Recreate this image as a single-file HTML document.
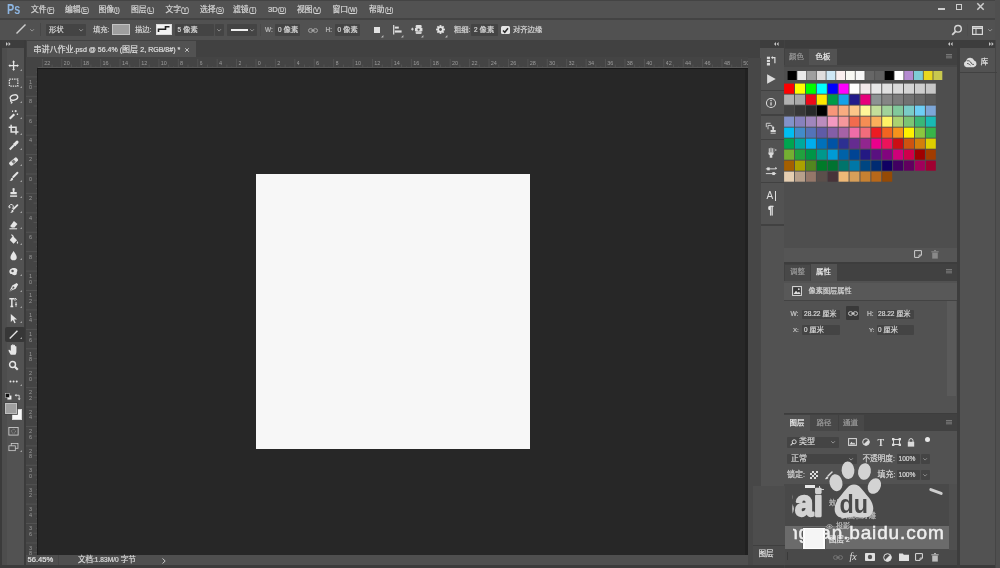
<!DOCTYPE html>
<html lang="zh-CN"><head><meta charset="utf-8"><title>Photoshop</title>
<style>
*{box-sizing:border-box;margin:0;padding:0}
html,body{width:1000px;height:568px;overflow:hidden;background:#535353}
#root{position:absolute;left:0;top:0;width:1000px;height:568px;will-change:transform;opacity:0.9999}
body{position:relative;font-family:"Liberation Sans","Noto Sans CJK SC",sans-serif;font-size:8px;color:#d6d6d6;line-height:1}
.b{position:absolute}
.t{position:absolute;white-space:nowrap;font-size:8px;line-height:10px;height:10px;color:#d6d6d6;-webkit-text-stroke:0.22px currentColor}
.f{position:absolute;background:#454545;border-radius:1px}
u{text-decoration:underline;text-underline-offset:1px}
svg{position:absolute;overflow:visible}
.rn{position:absolute;font-size:5.5px;line-height:6px;color:#9c9c9c;white-space:nowrap}
.sw{position:absolute;width:10px;height:10px}
.rs{position:absolute;width:9px;height:9px}
</style></head><body><div id="root">

<div class="b" style="left:0px;top:0px;width:1000px;height:18px;background:#535353;"></div>
<div class="b" style="left:0px;top:18px;width:1000px;height:1.5px;background:#444444;"></div>
<div class="b" style="left:0px;top:0px;width:1000px;height:0.7px;background:#454545;"></div>
<div class="b" style="left:6.8px;top:0.5px;font-size:15px;line-height:16px;font-weight:bold;color:#8eb6e2;transform:scaleX(0.72);transform-origin:0 0">Ps</div>
<div class="t" style="left:31px;top:5px;font-size:7.8px">文件<span style="display:inline-block;transform:scaleX(0.76);transform-origin:0 50%;margin-right:-2.39px">(<u>F</u>)</span></div>
<div class="t" style="left:65px;top:5px;font-size:7.8px">编辑<span style="display:inline-block;transform:scaleX(0.76);transform-origin:0 50%;margin-right:-2.50px">(<u>E</u>)</span></div>
<div class="t" style="left:98.5px;top:5px;font-size:7.8px">图像<span style="display:inline-block;transform:scaleX(0.76);transform-origin:0 50%;margin-right:-1.77px">(<u>I</u>)</span></div>
<div class="t" style="left:131px;top:5px;font-size:7.8px">图层<span style="display:inline-block;transform:scaleX(0.76);transform-origin:0 50%;margin-right:-2.29px">(<u>L</u>)</span></div>
<div class="t" style="left:165.5px;top:5px;font-size:7.8px">文字<span style="display:inline-block;transform:scaleX(0.76);transform-origin:0 50%;margin-right:-2.50px">(<u>Y</u>)</span></div>
<div class="t" style="left:200px;top:5px;font-size:7.8px">选择<span style="display:inline-block;transform:scaleX(0.76);transform-origin:0 50%;margin-right:-2.50px">(<u>S</u>)</span></div>
<div class="t" style="left:233px;top:5px;font-size:7.8px">滤镜<span style="display:inline-block;transform:scaleX(0.76);transform-origin:0 50%;margin-right:-2.39px">(<u>T</u>)</span></div>
<div class="t" style="left:268px;top:5px;font-size:7.8px"><span style="font-size:0.98em">3D</span><span style="display:inline-block;transform:scaleX(0.76);transform-origin:0 50%;margin-right:-2.60px">(<u>D</u>)</span></div>
<div class="t" style="left:297px;top:5px;font-size:7.8px">视图<span style="display:inline-block;transform:scaleX(0.76);transform-origin:0 50%;margin-right:-2.50px">(<u>V</u>)</span></div>
<div class="t" style="left:332.5px;top:5px;font-size:7.8px">窗口<span style="display:inline-block;transform:scaleX(0.76);transform-origin:0 50%;margin-right:-3.01px">(<u>W</u>)</span></div>
<div class="t" style="left:369px;top:5px;font-size:7.8px">帮助<span style="display:inline-block;transform:scaleX(0.76);transform-origin:0 50%;margin-right:-2.60px">(<u>H</u>)</span></div>
<div class="b" style="left:938px;top:8px;width:7px;height:1.5px;background:#cfcfcf;"></div>
<div class="b" style="left:955.5px;top:3.5px;width:6.5px;height:6px;border:1.3px solid #cfcfcf"></div>
<svg style="left:977px;top:3px" width="7" height="7" viewBox="0 0 7 7"><path d="M0.3 0.3L6.7 6.7M6.7 0.3L0.3 6.7" stroke="#cfcfcf" stroke-width="1.5" fill="none"/></svg>
<div class="b" style="left:0px;top:19.5px;width:1000px;height:20.5px;background:#525252;"></div>
<svg style="left:15px;top:23px" width="12" height="12" viewBox="0 0 12 12"><path d="M1.5 10.5L10.5 1.5" stroke="#cfcfcf" stroke-width="1.4" fill="none"/></svg>
<svg style="left:30.4px;top:28.8px" width="4.2" height="2.5" viewBox="0 0 5 3"><path d="M0.3 0.3L2.5 2.5L4.7 0.3" stroke="#a4a4a4" stroke-width="1.0" fill="none"/></svg>
<div class="b" style="left:40px;top:23px;width:1px;height:13px;background:#484848;"></div>
<div class="f" style="left:46px;top:24px;width:40px;height:11.5px"></div>
<div class="t" style="left:49px;top:25px;font-size:7.3px">形状</div>
<svg style="left:79.4px;top:28.8px" width="4.2" height="2.5" viewBox="0 0 5 3"><path d="M0.3 0.3L2.5 2.5L4.7 0.3" stroke="#a4a4a4" stroke-width="1.0" fill="none"/></svg>
<div class="t" style="left:93px;top:25px;font-size:7.3px">填充<span style="font-size:0.88em">:</span></div>
<div class="b" style="left:112px;top:23.5px;width:17.5px;height:11.5px;background:#a0a0a0;border:1px solid #c4c4c4"></div>
<div class="t" style="left:135px;top:25px;font-size:7.3px">描边<span style="font-size:0.88em">:</span></div>
<div class="b" style="left:155.5px;top:23.5px;width:16.5px;height:11.5px;background:#f4f4f4;border:1px solid #dcdcdc"></div>
<svg style="left:158px;top:26px" width="12" height="7" viewBox="0 0 12 7"><path d="M0.5 6V3.2H7.5V0.8H11.5" stroke="#222" stroke-width="1.6" fill="none"/></svg>
<div class="f" style="left:175px;top:24px;width:38.5px;height:11.5px"></div>
<div class="t" style="left:177.5px;top:25px;font-size:7.3px"><span style="font-size:0.88em">5</span> 像素</div>
<div class="f" style="left:215px;top:24px;width:8.5px;height:11.5px"></div>
<svg style="left:217.20000000000002px;top:28.8px" width="4.2" height="2.5" viewBox="0 0 5 3"><path d="M0.3 0.3L2.5 2.5L4.7 0.3" stroke="#a4a4a4" stroke-width="1.0" fill="none"/></svg>
<div class="f" style="left:227px;top:24px;width:29.5px;height:11.5px"></div>
<div class="b" style="left:230.5px;top:29.2px;width:17.5px;height:1.6px;background:#f0f0f0;"></div>
<svg style="left:249.9px;top:28.8px" width="4.2" height="2.5" viewBox="0 0 5 3"><path d="M0.3 0.3L2.5 2.5L4.7 0.3" stroke="#a4a4a4" stroke-width="1.0" fill="none"/></svg>
<div class="b" style="left:259.5px;top:23.5px;width:1px;height:12.5px;background:#4b4b4b;"></div>
<div class="t" style="left:265px;top:25px;font-size:7.3px;color:#bdbdbd"><span style="font-size:0.88em">W:</span></div>
<div class="f" style="left:275px;top:24px;width:24.5px;height:11.5px"></div>
<div class="t" style="left:278px;top:25px;font-size:7.3px"><span style="font-size:0.88em">0</span> 像素</div>
<svg style="left:307.5px;top:27.5px" width="10" height="5" viewBox="0 0 10 5"><rect x="0.5" y="0.7" width="4.2" height="3.6" rx="1.8" fill="none" stroke="#a8a8a8" stroke-width="1"/><rect x="5.3" y="0.7" width="4.2" height="3.6" rx="1.8" fill="none" stroke="#a8a8a8" stroke-width="1"/><path d="M3.4 2.5H6.6" stroke="#a8a8a8" stroke-width="1"/></svg>
<div class="t" style="left:325.5px;top:25px;font-size:7.3px;color:#bdbdbd"><span style="font-size:0.88em">H:</span></div>
<div class="f" style="left:334.5px;top:24px;width:25px;height:11.5px"></div>
<div class="t" style="left:337.5px;top:25px;font-size:7.3px"><span style="font-size:0.88em">0</span> 像素</div>
<div class="b" style="left:374px;top:26.8px;width:6.3px;height:6.2px;background:#e4e4e4;"></div>
<svg style="left:380.8px;top:35px" width="2.4" height="2.4" viewBox="0 0 3 3"><path d="M3 0V3H0Z" fill="#bdbdbd"/></svg>
<svg style="left:393px;top:25px" width="9" height="9.5" viewBox="0 0 9 9.5"><path d="M0.7 0V9.5" stroke="#e0e0e0" stroke-width="1.2"/><rect x="1.8" y="1.6" width="4" height="2" fill="#e0e0e0"/><rect x="1.8" y="5.4" width="6.8" height="2.2" fill="#e0e0e0"/></svg>
<svg style="left:400.8px;top:35px" width="2.4" height="2.4" viewBox="0 0 3 3"><path d="M3 0V3H0Z" fill="#bdbdbd"/></svg>
<svg style="left:411.3px;top:24px" width="13" height="11.2" viewBox="0 0 14 12"><path d="M0 5.5H3M1.5 4V7" stroke="#e0e0e0" stroke-width="1"/><rect x="5" y="1" width="6.5" height="3.4" rx="1.2" fill="#e0e0e0"/><rect x="4.3" y="4.2" width="8" height="3.6" fill="#e0e0e0"/><rect x="5" y="7.8" width="6.5" height="3" rx="1" fill="#cfcfcf"/><circle cx="8.2" cy="6" r="1.2" fill="#535353"/></svg>
<svg style="left:421px;top:35px" width="2.4" height="2.4" viewBox="0 0 3 3"><path d="M3 0V3H0Z" fill="#bdbdbd"/></svg>
<svg style="left:436px;top:25px" width="9" height="9" viewBox="-5 -5 10 10"><rect x="-1" y="-4.9" width="2" height="2.4" fill="#e4e4e4" transform="rotate(0)"/><rect x="-1" y="-4.9" width="2" height="2.4" fill="#e4e4e4" transform="rotate(45)"/><rect x="-1" y="-4.9" width="2" height="2.4" fill="#e4e4e4" transform="rotate(90)"/><rect x="-1" y="-4.9" width="2" height="2.4" fill="#e4e4e4" transform="rotate(135)"/><rect x="-1" y="-4.9" width="2" height="2.4" fill="#e4e4e4" transform="rotate(180)"/><rect x="-1" y="-4.9" width="2" height="2.4" fill="#e4e4e4" transform="rotate(225)"/><rect x="-1" y="-4.9" width="2" height="2.4" fill="#e4e4e4" transform="rotate(270)"/><rect x="-1" y="-4.9" width="2" height="2.4" fill="#e4e4e4" transform="rotate(315)"/><circle r="3.5" fill="#e4e4e4"/><circle r="1.6" fill="#535353"/></svg>
<svg style="left:444.8px;top:35px" width="2.4" height="2.4" viewBox="0 0 3 3"><path d="M3 0V3H0Z" fill="#bdbdbd"/></svg>
<div class="t" style="left:454px;top:25px;font-size:7.3px">粗细<span style="font-size:0.88em">:</span></div>
<div class="f" style="left:471px;top:24px;width:27px;height:11.5px"></div>
<div class="t" style="left:474px;top:25px;font-size:7.3px"><span style="font-size:0.88em">2</span> 像素</div>
<div class="b" style="left:500.5px;top:25.5px;width:9px;height:8.5px;background:#e6e6e6;border-radius:1.5px"></div>
<svg style="left:501.5px;top:26.5px" width="7" height="7" viewBox="0 0 7 7"><path d="M1 3.4L2.8 5.3L6 1.2" stroke="#2a2a2a" stroke-width="1.5" fill="none"/></svg>
<div class="t" style="left:513px;top:25px;font-size:7.3px">对齐边缘</div>
<svg style="left:951px;top:24px" width="12" height="12" viewBox="0 0 12 12"><circle cx="7" cy="4.8" r="3.3" fill="none" stroke="#d8d8d8" stroke-width="1.4"/><path d="M4.6 7.4L1.2 10.8" stroke="#d8d8d8" stroke-width="1.8"/></svg>
<div class="b" style="left:967px;top:24px;width:1px;height:12px;background:#4e4e4e;"></div>
<svg style="left:972px;top:25.5px" width="11" height="9" viewBox="0 0 11 9"><rect x="0.6" y="0.6" width="9.8" height="7.8" fill="none" stroke="#d8d8d8" stroke-width="1.2"/><path d="M0.6 2.2H10.4" stroke="#d8d8d8" stroke-width="1.6"/><path d="M4 2V8.4" stroke="#d8d8d8" stroke-width="1"/></svg>
<svg style="left:987.9px;top:28.8px" width="4.2" height="2.5" viewBox="0 0 5 3"><path d="M0.3 0.3L2.5 2.5L4.7 0.3" stroke="#a4a4a4" stroke-width="1.0" fill="none"/></svg>
<div class="b" style="left:0px;top:40px;width:1000px;height:8px;background:#3e3e3e;"></div>
<div class="b" style="left:0px;top:48px;width:24.3px;height:520px;background:#535353;"></div>
<div class="b" style="left:24.3px;top:40px;width:1.4px;height:528px;background:#3c3c3c;"></div>
<div class="b" style="left:0px;top:40px;width:1.5px;height:528px;background:#3c3c3c;"></div>
<div class="b" style="left:1.5px;top:48px;width:5.5px;height:517px;background:#4e4e4e;"></div>
<svg style="left:5.5px;top:42px" width="5" height="4" viewBox="0 0 5 4"><path d="M0 0L2 2L0 4Z M2.6 0L4.6 2L2.6 4Z" fill="#c8c8c8"/></svg>
<div class="b" style="left:25.7px;top:40px;width:734.8px;height:18px;background:#424242;"></div>
<div class="b" style="left:27px;top:40.5px;width:168.5px;height:17.5px;background:#535353;"></div>
<div class="t" style="left:33.5px;top:44.5px;color:#dedede">串讲八作业<span style="font-size:0.88em">.psd @ 56.4% (</span>图层 <span style="font-size:0.88em">2, RGB/8#) *</span></div>
<svg style="left:185px;top:47.5px" width="4" height="4" viewBox="0 0 4 4"><path d="M0.2 0.2L3.8 3.8M3.8 0.2L0.2 3.8" stroke="#d0d0d0" stroke-width="0.9"/></svg>
<div class="b" style="left:25.7px;top:57px;width:722.3px;height:11.5px;background:#454545;"></div>
<div class="b" style="left:25.7px;top:57px;width:12.3px;height:498px;background:#454545;"></div>
<div class="b" style="left:38px;top:68.5px;width:710px;height:486px;background:#282828;"></div>
<div class="b" style="left:744.5px;top:68.5px;width:3.5px;height:486px;background:#222222;"></div>
<div class="b" style="left:748px;top:58px;width:12.5px;height:510px;background:#484848;"></div>
<svg style="left:0;top:0" width="1000" height="568" viewBox="0 0 1000 568"><path d="M42.39 59V68.5 M47.25 66.5V68.5 M52.10 64.5V68.5 M56.96 66.5V68.5 M61.81 59V68.5 M66.67 66.5V68.5 M71.52 64.5V68.5 M76.38 66.5V68.5 M81.23 59V68.5 M86.09 66.5V68.5 M90.94 64.5V68.5 M95.79 66.5V68.5 M100.65 59V68.5 M105.50 66.5V68.5 M110.36 64.5V68.5 M115.21 66.5V68.5 M120.07 59V68.5 M124.92 66.5V68.5 M129.78 64.5V68.5 M134.63 66.5V68.5 M139.49 59V68.5 M144.34 66.5V68.5 M149.20 64.5V68.5 M154.05 66.5V68.5 M158.91 59V68.5 M163.76 66.5V68.5 M168.62 64.5V68.5 M173.47 66.5V68.5 M178.32 59V68.5 M183.18 66.5V68.5 M188.03 64.5V68.5 M192.89 66.5V68.5 M197.74 59V68.5 M202.60 66.5V68.5 M207.45 64.5V68.5 M212.31 66.5V68.5 M217.16 59V68.5 M222.02 66.5V68.5 M226.87 64.5V68.5 M231.73 66.5V68.5 M236.58 59V68.5 M241.44 66.5V68.5 M246.29 64.5V68.5 M251.15 66.5V68.5 M256.00 59V68.5 M260.85 66.5V68.5 M265.71 64.5V68.5 M270.56 66.5V68.5 M275.42 59V68.5 M280.27 66.5V68.5 M285.13 64.5V68.5 M289.98 66.5V68.5 M294.84 59V68.5 M299.69 66.5V68.5 M304.55 64.5V68.5 M309.40 66.5V68.5 M314.26 59V68.5 M319.11 66.5V68.5 M323.97 64.5V68.5 M328.82 66.5V68.5 M333.68 59V68.5 M338.53 66.5V68.5 M343.38 64.5V68.5 M348.24 66.5V68.5 M353.09 59V68.5 M357.95 66.5V68.5 M362.80 64.5V68.5 M367.66 66.5V68.5 M372.51 59V68.5 M377.37 66.5V68.5 M382.22 64.5V68.5 M387.08 66.5V68.5 M391.93 59V68.5 M396.79 66.5V68.5 M401.64 64.5V68.5 M406.50 66.5V68.5 M411.35 59V68.5 M416.21 66.5V68.5 M421.06 64.5V68.5 M425.91 66.5V68.5 M430.77 59V68.5 M435.62 66.5V68.5 M440.48 64.5V68.5 M445.33 66.5V68.5 M450.19 59V68.5 M455.04 66.5V68.5 M459.90 64.5V68.5 M464.75 66.5V68.5 M469.61 59V68.5 M474.46 66.5V68.5 M479.32 64.5V68.5 M484.17 66.5V68.5 M489.03 59V68.5 M493.88 66.5V68.5 M498.74 64.5V68.5 M503.59 66.5V68.5 M508.45 59V68.5 M513.30 66.5V68.5 M518.15 64.5V68.5 M523.01 66.5V68.5 M527.86 59V68.5 M532.72 66.5V68.5 M537.57 64.5V68.5 M542.43 66.5V68.5 M547.28 59V68.5 M552.14 66.5V68.5 M556.99 64.5V68.5 M561.85 66.5V68.5 M566.70 59V68.5 M571.56 66.5V68.5 M576.41 64.5V68.5 M581.27 66.5V68.5 M586.12 59V68.5 M590.98 66.5V68.5 M595.83 64.5V68.5 M600.68 66.5V68.5 M605.54 59V68.5 M610.39 66.5V68.5 M615.25 64.5V68.5 M620.10 66.5V68.5 M624.96 59V68.5 M629.81 66.5V68.5 M634.67 64.5V68.5 M639.52 66.5V68.5 M644.38 59V68.5 M649.23 66.5V68.5 M654.09 64.5V68.5 M658.94 66.5V68.5 M663.80 59V68.5 M668.65 66.5V68.5 M673.51 64.5V68.5 M678.36 66.5V68.5 M683.21 59V68.5 M688.07 66.5V68.5 M692.92 64.5V68.5 M697.78 66.5V68.5 M702.63 59V68.5 M707.49 66.5V68.5 M712.34 64.5V68.5 M717.20 66.5V68.5 M722.05 59V68.5 M726.91 66.5V68.5 M731.76 64.5V68.5 M736.62 66.5V68.5 M741.47 59V68.5 M746.33 66.5V68.5" stroke="#5e5e5e" stroke-width="0.6" fill="none"/></svg>
<div class="rn" style="left:44.2px;top:59.6px;max-width:703.8px;overflow:hidden">22</div>
<div class="rn" style="left:63.6px;top:59.6px;max-width:684.4px;overflow:hidden">20</div>
<div class="rn" style="left:83.0px;top:59.6px;max-width:665.0px;overflow:hidden">18</div>
<div class="rn" style="left:102.4px;top:59.6px;max-width:645.6px;overflow:hidden">16</div>
<div class="rn" style="left:121.9px;top:59.6px;max-width:626.1px;overflow:hidden">14</div>
<div class="rn" style="left:141.3px;top:59.6px;max-width:606.7px;overflow:hidden">12</div>
<div class="rn" style="left:160.7px;top:59.6px;max-width:587.3px;overflow:hidden">10</div>
<div class="rn" style="left:180.1px;top:59.6px;max-width:567.9px;overflow:hidden">8</div>
<div class="rn" style="left:199.5px;top:59.6px;max-width:548.5px;overflow:hidden">6</div>
<div class="rn" style="left:219.0px;top:59.6px;max-width:529.0px;overflow:hidden">4</div>
<div class="rn" style="left:238.4px;top:59.6px;max-width:509.6px;overflow:hidden">2</div>
<div class="rn" style="left:257.8px;top:59.6px;max-width:490.2px;overflow:hidden">0</div>
<div class="rn" style="left:277.2px;top:59.6px;max-width:470.8px;overflow:hidden">2</div>
<div class="rn" style="left:296.6px;top:59.6px;max-width:451.4px;overflow:hidden">4</div>
<div class="rn" style="left:316.1px;top:59.6px;max-width:431.9px;overflow:hidden">6</div>
<div class="rn" style="left:335.5px;top:59.6px;max-width:412.5px;overflow:hidden">8</div>
<div class="rn" style="left:354.9px;top:59.6px;max-width:393.1px;overflow:hidden">10</div>
<div class="rn" style="left:374.3px;top:59.6px;max-width:373.7px;overflow:hidden">12</div>
<div class="rn" style="left:393.7px;top:59.6px;max-width:354.3px;overflow:hidden">14</div>
<div class="rn" style="left:413.2px;top:59.6px;max-width:334.8px;overflow:hidden">16</div>
<div class="rn" style="left:432.6px;top:59.6px;max-width:315.4px;overflow:hidden">18</div>
<div class="rn" style="left:452.0px;top:59.6px;max-width:296.0px;overflow:hidden">20</div>
<div class="rn" style="left:471.4px;top:59.6px;max-width:276.6px;overflow:hidden">22</div>
<div class="rn" style="left:490.8px;top:59.6px;max-width:257.2px;overflow:hidden">24</div>
<div class="rn" style="left:510.2px;top:59.6px;max-width:237.8px;overflow:hidden">26</div>
<div class="rn" style="left:529.7px;top:59.6px;max-width:218.3px;overflow:hidden">28</div>
<div class="rn" style="left:549.1px;top:59.6px;max-width:198.9px;overflow:hidden">30</div>
<div class="rn" style="left:568.5px;top:59.6px;max-width:179.5px;overflow:hidden">32</div>
<div class="rn" style="left:587.9px;top:59.6px;max-width:160.1px;overflow:hidden">34</div>
<div class="rn" style="left:607.3px;top:59.6px;max-width:140.7px;overflow:hidden">36</div>
<div class="rn" style="left:626.8px;top:59.6px;max-width:121.2px;overflow:hidden">38</div>
<div class="rn" style="left:646.2px;top:59.6px;max-width:101.8px;overflow:hidden">40</div>
<div class="rn" style="left:665.6px;top:59.6px;max-width:82.4px;overflow:hidden">42</div>
<div class="rn" style="left:685.0px;top:59.6px;max-width:63.0px;overflow:hidden">44</div>
<div class="rn" style="left:704.4px;top:59.6px;max-width:43.6px;overflow:hidden">46</div>
<div class="rn" style="left:723.9px;top:59.6px;max-width:24.1px;overflow:hidden">48</div>
<div class="rn" style="left:743.3px;top:59.6px;max-width:4.7px;overflow:hidden">50</div>
<svg style="left:0;top:0" width="1000" height="568" viewBox="0 0 1000 568"><path d="M36 72.05H38 M26 76.91H38 M36 81.76H38 M33.5 86.62H38 M36 91.47H38 M26 96.32H38 M36 101.18H38 M33.5 106.03H38 M36 110.89H38 M26 115.74H38 M36 120.60H38 M33.5 125.45H38 M36 130.31H38 M26 135.16H38 M36 140.02H38 M33.5 144.87H38 M36 149.73H38 M26 154.58H38 M36 159.44H38 M33.5 164.29H38 M36 169.15H38 M26 174.00H38 M36 178.85H38 M33.5 183.71H38 M36 188.56H38 M26 193.42H38 M36 198.27H38 M33.5 203.13H38 M36 207.98H38 M26 212.84H38 M36 217.69H38 M33.5 222.55H38 M36 227.40H38 M26 232.26H38 M36 237.11H38 M33.5 241.97H38 M36 246.82H38 M26 251.68H38 M36 256.53H38 M33.5 261.38H38 M36 266.24H38 M26 271.09H38 M36 275.95H38 M33.5 280.80H38 M36 285.66H38 M26 290.51H38 M36 295.37H38 M33.5 300.22H38 M36 305.08H38 M26 309.93H38 M36 314.79H38 M33.5 319.64H38 M36 324.50H38 M26 329.35H38 M36 334.21H38 M33.5 339.06H38 M36 343.91H38 M26 348.77H38 M36 353.62H38 M33.5 358.48H38 M36 363.33H38 M26 368.19H38 M36 373.04H38 M33.5 377.90H38 M36 382.75H38 M26 387.61H38 M36 392.46H38 M33.5 397.32H38 M36 402.17H38 M26 407.03H38 M36 411.88H38 M33.5 416.74H38 M36 421.59H38 M26 426.45H38 M36 431.30H38 M33.5 436.15H38 M36 441.01H38 M26 445.86H38 M36 450.72H38 M33.5 455.57H38 M36 460.43H38 M26 465.28H38 M36 470.14H38 M33.5 474.99H38 M36 479.85H38 M26 484.70H38 M36 489.56H38 M33.5 494.41H38 M36 499.27H38 M26 504.12H38 M36 508.98H38 M33.5 513.83H38 M36 518.68H38 M26 523.54H38 M36 528.39H38 M33.5 533.25H38 M36 538.10H38 M26 542.96H38 M36 547.81H38 M33.5 552.67H38" stroke="#5e5e5e" stroke-width="0.6" fill="none"/></svg>
<div class="rn" style="left:29px;top:78.7px">1</div>
<div class="rn" style="left:29px;top:84.3px">0</div>
<div class="rn" style="left:29px;top:98.1px">8</div>
<div class="rn" style="left:29px;top:117.5px">6</div>
<div class="rn" style="left:29px;top:137.0px">4</div>
<div class="rn" style="left:29px;top:156.4px">2</div>
<div class="rn" style="left:29px;top:175.8px">0</div>
<div class="rn" style="left:29px;top:195.2px">2</div>
<div class="rn" style="left:29px;top:214.6px">4</div>
<div class="rn" style="left:29px;top:234.1px">6</div>
<div class="rn" style="left:29px;top:253.5px">8</div>
<div class="rn" style="left:29px;top:272.9px">1</div>
<div class="rn" style="left:29px;top:278.5px">0</div>
<div class="rn" style="left:29px;top:292.3px">1</div>
<div class="rn" style="left:29px;top:297.9px">2</div>
<div class="rn" style="left:29px;top:311.7px">1</div>
<div class="rn" style="left:29px;top:317.3px">4</div>
<div class="rn" style="left:29px;top:331.2px">1</div>
<div class="rn" style="left:29px;top:336.8px">6</div>
<div class="rn" style="left:29px;top:350.6px">1</div>
<div class="rn" style="left:29px;top:356.2px">8</div>
<div class="rn" style="left:29px;top:370.0px">2</div>
<div class="rn" style="left:29px;top:375.6px">0</div>
<div class="rn" style="left:29px;top:389.4px">2</div>
<div class="rn" style="left:29px;top:395.0px">2</div>
<div class="rn" style="left:29px;top:408.8px">2</div>
<div class="rn" style="left:29px;top:414.4px">4</div>
<div class="rn" style="left:29px;top:428.2px">2</div>
<div class="rn" style="left:29px;top:433.8px">6</div>
<div class="rn" style="left:29px;top:447.7px">2</div>
<div class="rn" style="left:29px;top:453.3px">8</div>
<div class="rn" style="left:29px;top:467.1px">3</div>
<div class="rn" style="left:29px;top:472.7px">0</div>
<div class="rn" style="left:29px;top:486.5px">3</div>
<div class="rn" style="left:29px;top:492.1px">2</div>
<div class="rn" style="left:29px;top:505.9px">3</div>
<div class="rn" style="left:29px;top:511.5px">4</div>
<div class="rn" style="left:29px;top:525.3px">3</div>
<div class="rn" style="left:29px;top:530.9px">6</div>
<div class="rn" style="left:29px;top:544.8px">3</div>
<div class="rn" style="left:29px;top:550.4px">8</div>
<div class="b" style="left:38px;top:66.9px;width:710px;height:0.8px;background:#585858;"></div>
<div class="b" style="left:36.5px;top:68px;width:0.8px;height:486.5px;background:#585858;"></div>
<div class="b" style="left:37.4px;top:67.7px;width:710.6px;height:1.3px;background:#181818;"></div>
<div class="b" style="left:37.3px;top:68px;width:1.2px;height:486.5px;background:#1c1c1c;"></div>
<div class="b" style="left:256px;top:174px;width:274px;height:275px;background:#f8f8f8;"></div>
<div class="b" style="left:25.7px;top:554.5px;width:722.3px;height:11px;background:#505050;"></div>
<div class="b" style="left:0px;top:565px;width:1000px;height:3px;background:#3c3c3c;"></div>
<div class="t" style="left:27.5px;top:555px;font-size:7.6px;color:#e0e0e0">56.45%</div>
<div class="b" style="left:58px;top:555px;width:1px;height:10px;background:#484848;"></div>
<div class="t" style="left:78px;top:555px;font-size:7.5px;color:#d8d8d8">文档<span style="font-size:0.88em">:1.83M/0</span> 字节</div>
<svg style="left:161.5px;top:557.5px" width="4" height="6" viewBox="0 0 4 6"><path d="M0.5 0.5L3.2 3L0.5 5.5" stroke="#c8c8c8" stroke-width="1" fill="none"/></svg>
<svg style="left:8.4px;top:60.4px" width="11.2" height="11.2" viewBox="0 0 16 16" fill="none" stroke="#e6e6e6" stroke-width="1.68"><path d="M8 1.5V14.5M1.5 8H14.5" stroke-width="1.82"/><path d="M8 0.5L10 3.2H6Z M8 15.5L10 12.8H6Z M0.5 8L3.2 6V10Z M15.5 8L12.8 6V10Z" fill="#e6e6e6" stroke="none"/></svg>
<svg style="left:20px;top:68.8px" width="2" height="2" viewBox="0 0 3 3"><path d="M3 0V3H0Z" fill="#a0a0a0"/></svg>
<svg style="left:8.4px;top:77.1px" width="11.2" height="11.2" viewBox="0 0 16 16" fill="none" stroke="#e6e6e6" stroke-width="1.68"><rect x="2" y="3" width="12" height="10" stroke-dasharray="2 1.4" stroke-width="1.82"/></svg>
<svg style="left:20px;top:85.52px" width="2" height="2" viewBox="0 0 3 3"><path d="M3 0V3H0Z" fill="#a0a0a0"/></svg>
<svg style="left:8.4px;top:92.8px" width="11.2" height="11.2" viewBox="0 0 16 16" fill="none" stroke="#e6e6e6" stroke-width="1.68"><ellipse cx="8.5" cy="6.5" rx="5.5" ry="3.6" transform="rotate(-20 8.5 6.5)" stroke-width="1.96"/><path d="M4.5 9.5C3 10.5 3.5 12.5 5 12.5C6.5 12.5 6 14.5 4 14.5" stroke-width="1.54"/></svg>
<svg style="left:20px;top:101.24px" width="2" height="2" viewBox="0 0 3 3"><path d="M3 0V3H0Z" fill="#a0a0a0"/></svg>
<svg style="left:8.4px;top:108.6px" width="11.2" height="11.2" viewBox="0 0 16 16" fill="none" stroke="#e6e6e6" stroke-width="1.68"><path d="M2.5 14L9 7.5" stroke-width="3.08"/><path d="M11 1.5V4.5M9.5 3H12.5M13.5 6.5V8.5M12.5 7.5H14.5M6.5 2.5V4M5.7 3.2H7.3" stroke-width="1.40"/></svg>
<svg style="left:20px;top:116.96px" width="2" height="2" viewBox="0 0 3 3"><path d="M3 0V3H0Z" fill="#a0a0a0"/></svg>
<svg style="left:8.4px;top:124.3px" width="11.2" height="11.2" viewBox="0 0 16 16" fill="none" stroke="#e6e6e6" stroke-width="1.68"><path d="M4.5 1V11.5H15M1 4.5H11.5V15" stroke-width="2.10"/></svg>
<svg style="left:20px;top:132.68px" width="2" height="2" viewBox="0 0 3 3"><path d="M3 0V3H0Z" fill="#a0a0a0"/></svg>
<svg style="left:8.4px;top:140.0px" width="11.2" height="11.2" viewBox="0 0 16 16" fill="none" stroke="#e6e6e6" stroke-width="1.68"><path d="M2.5 13.5L8.5 7.5" stroke-width="2.80"/><path d="M8 5L11 8" stroke-width="2.24"/><path d="M10 6L13 3" stroke-width="4.20" stroke-linecap="round"/></svg>
<svg style="left:20px;top:148.40000000000003px" width="2" height="2" viewBox="0 0 3 3"><path d="M3 0V3H0Z" fill="#a0a0a0"/></svg>
<svg style="left:8.4px;top:155.7px" width="11.2" height="11.2" viewBox="0 0 16 16" fill="none" stroke="#e6e6e6" stroke-width="1.68"><rect x="1" y="5" width="14" height="6" rx="2" transform="rotate(-40 8 8)" fill="#e6e6e6" stroke="none"/><rect x="5.8" y="5.8" width="4.4" height="4.4" transform="rotate(-40 8 8)" fill="#777" stroke="none"/></svg>
<svg style="left:20px;top:164.12px" width="2" height="2" viewBox="0 0 3 3"><path d="M3 0V3H0Z" fill="#a0a0a0"/></svg>
<svg style="left:8.4px;top:171.4px" width="11.2" height="11.2" viewBox="0 0 16 16" fill="none" stroke="#e6e6e6" stroke-width="1.68"><path d="M13.5 2.5L7.5 8.5" stroke-width="2.80" stroke-linecap="round"/><path d="M6.5 9.5C4.5 9.5 4 11 4 12C3.5 13 2.5 13.5 2 13.5C4 14.5 7 14 7.5 11.5Z" fill="#e6e6e6" stroke="none"/></svg>
<svg style="left:20px;top:179.84000000000003px" width="2" height="2" viewBox="0 0 3 3"><path d="M3 0V3H0Z" fill="#a0a0a0"/></svg>
<svg style="left:8.4px;top:187.2px" width="11.2" height="11.2" viewBox="0 0 16 16" fill="none" stroke="#e6e6e6" stroke-width="1.68"><path d="M6.3 2.5A1.9 1.9 0 0 1 9.7 2.5L9 7H12.5V10.5H3.5V7H7Z" fill="#e6e6e6" stroke="none"/><path d="M3 13H13" stroke-width="2.10"/></svg>
<svg style="left:20px;top:195.56px" width="2" height="2" viewBox="0 0 3 3"><path d="M3 0V3H0Z" fill="#a0a0a0"/></svg>
<svg style="left:8.4px;top:202.9px" width="11.2" height="11.2" viewBox="0 0 16 16" fill="none" stroke="#e6e6e6" stroke-width="1.68"><path d="M13.5 3L8 8.5" stroke-width="2.52" stroke-linecap="round"/><path d="M7 9.5C5.3 9.5 5 11 5 12C4.5 13 3.5 13.5 3 13.5C5 14.3 7.5 14 8 11.5Z" fill="#e6e6e6" stroke="none"/><path d="M2 6.5A3 3 0 1 1 5.5 8" stroke-width="1.40"/><path d="M1 5L2 7L3.8 5.8" stroke-width="1.26"/></svg>
<svg style="left:20px;top:211.28000000000003px" width="2" height="2" viewBox="0 0 3 3"><path d="M3 0V3H0Z" fill="#a0a0a0"/></svg>
<svg style="left:8.4px;top:218.6px" width="11.2" height="11.2" viewBox="0 0 16 16" fill="none" stroke="#e6e6e6" stroke-width="1.68"><path d="M8.5 3L13.5 7L9 12.5H5.5L3 10.3Z" fill="#e6e6e6" stroke="none"/><path d="M3.5 10.7L6 13H9" stroke="#777" stroke-width="1.12"/><path d="M2 14H13" stroke-width="1.54"/></svg>
<svg style="left:20px;top:227.00000000000003px" width="2" height="2" viewBox="0 0 3 3"><path d="M3 0V3H0Z" fill="#a0a0a0"/></svg>
<svg style="left:8.4px;top:234.3px" width="11.2" height="11.2" viewBox="0 0 16 16" fill="none" stroke="#e6e6e6" stroke-width="1.68"><path d="M7 3L13 9L8 14L2.5 8.5Z" fill="#e6e6e6" stroke="none"/><path d="M4.5 1.5C6.5 1 8 3 7.5 6" stroke-width="1.54"/><path d="M13.5 10C14.8 12 14.8 13.8 13.5 13.8C12.2 13.8 12.2 12 13.5 10Z" fill="#e6e6e6" stroke="none"/></svg>
<svg style="left:20px;top:242.72000000000003px" width="2" height="2" viewBox="0 0 3 3"><path d="M3 0V3H0Z" fill="#a0a0a0"/></svg>
<svg style="left:8.4px;top:250.0px" width="11.2" height="11.2" viewBox="0 0 16 16" fill="none" stroke="#e6e6e6" stroke-width="1.68"><path d="M8 1.5C10.5 5.5 12.5 7.8 12.5 10.3A4.5 4.5 0 0 1 3.5 10.3C3.5 7.8 5.5 5.5 8 1.5Z" fill="#e6e6e6" stroke="none"/></svg>
<svg style="left:20px;top:258.44px" width="2" height="2" viewBox="0 0 3 3"><path d="M3 0V3H0Z" fill="#a0a0a0"/></svg>
<svg style="left:8.4px;top:265.8px" width="11.2" height="11.2" viewBox="0 0 16 16" fill="none" stroke="#e6e6e6" stroke-width="1.68"><path d="M3 5C5 2 11 2 13 4.5C14.5 7 12 8.5 12.5 10.5C13 13 9 14 7 12.5C5.5 11.5 3.5 12 2.5 10C1.5 8 2 6.5 3 5Z" fill="#e6e6e6" stroke="none"/><circle cx="6.5" cy="7" r="1.8" fill="#555" stroke="none"/></svg>
<svg style="left:20px;top:274.16px" width="2" height="2" viewBox="0 0 3 3"><path d="M3 0V3H0Z" fill="#a0a0a0"/></svg>
<svg style="left:8.4px;top:281.5px" width="11.2" height="11.2" viewBox="0 0 16 16" fill="none" stroke="#e6e6e6" stroke-width="1.68"><path d="M12.5 1.5L14.5 3.5L11 9.5L5 12L2 14L3.5 10.5L6 5Z" fill="#e6e6e6" stroke="none"/><circle cx="7.8" cy="8" r="1.4" fill="#555" stroke="none"/><path d="M2 14L7 9" stroke="#555" stroke-width="1.12"/></svg>
<svg style="left:20px;top:289.88000000000005px" width="2" height="2" viewBox="0 0 3 3"><path d="M3 0V3H0Z" fill="#a0a0a0"/></svg>
<svg style="left:8.4px;top:297.2px" width="11.2" height="11.2" viewBox="0 0 16 16" fill="none" stroke="#e6e6e6" stroke-width="1.68"><path d="M2 2.5H9M5.5 2.5V13.5M3.5 13.5H7.5" stroke-width="2.10"/><path d="M10 5.5V1.5L13 4M11.5 7V14M10 10.5H13" stroke-width="1.26"/></svg>
<svg style="left:20px;top:305.6px" width="2" height="2" viewBox="0 0 3 3"><path d="M3 0V3H0Z" fill="#a0a0a0"/></svg>
<svg style="left:8.4px;top:312.9px" width="11.2" height="11.2" viewBox="0 0 16 16" fill="none" stroke="#e6e6e6" stroke-width="1.68"><path d="M4 1.5V13L7 10L9.2 14.8L11 14L8.8 9.3H13Z" fill="#e6e6e6" stroke="none"/></svg>
<svg style="left:20px;top:321.32px" width="2" height="2" viewBox="0 0 3 3"><path d="M3 0V3H0Z" fill="#a0a0a0"/></svg>
<div class="b" style="left:5px;top:326.5px;width:19.5px;height:15.5px;background:#383838;border-radius:2px"></div>
<svg style="left:8.4px;top:328.6px" width="11.2" height="11.2" viewBox="0 0 16 16" fill="none" stroke="#e6e6e6" stroke-width="1.68"><path d="M2.5 13.5L13.5 2.5" stroke-width="1.96"/></svg>
<svg style="left:20px;top:337.04px" width="2" height="2" viewBox="0 0 3 3"><path d="M3 0V3H0Z" fill="#a0a0a0"/></svg>
<svg style="left:8.4px;top:344.4px" width="11.2" height="11.2" viewBox="0 0 16 16" fill="none" stroke="#e6e6e6" stroke-width="1.68"><path transform="translate(-1.3 -1.3) scale(1.16)" d="M4.5 14.5C3 12 1.5 10 1.8 8.6C2.5 7.8 3.7 8.6 4.6 9.8V3.4C4.6 2.2 6.2 2.2 6.2 3.4V2.2C6.2 1 8 1 8 2.2V3C8 1.9 9.8 1.9 9.8 3V4.4C9.8 3.4 11.5 3.4 11.5 4.5V10.5C11.5 12.2 11 13.3 10.3 14.5Z" fill="#e6e6e6" stroke="none"/></svg>
<svg style="left:8.4px;top:360.1px" width="11.2" height="11.2" viewBox="0 0 16 16" fill="none" stroke="#e6e6e6" stroke-width="1.68"><circle cx="6.5" cy="6.5" r="4.2" stroke-width="2.10"/><path d="M9.8 9.8L14 14" stroke-width="3.08"/></svg>
<svg style="left:8.4px;top:375.8px" width="11.2" height="11.2" viewBox="0 0 16 16" fill="none" stroke="#e6e6e6" stroke-width="1.68"><circle cx="3.5" cy="8" r="1.4" fill="#e6e6e6" stroke="none"/><circle cx="8" cy="8" r="1.4" fill="#e6e6e6" stroke="none"/><circle cx="12.5" cy="8" r="1.4" fill="#e6e6e6" stroke="none"/></svg>
<svg style="left:20px;top:384.20000000000005px" width="2" height="2" viewBox="0 0 3 3"><path d="M3 0V3H0Z" fill="#a0a0a0"/></svg>
<svg style="left:5.3px;top:393px" width="16.5" height="8.2" viewBox="0 0 18 9"><rect x="2.6" y="2.8" width="4.4" height="4.4" fill="#f0f0f0"/><rect x="0.6" y="0.8" width="4.2" height="4.2" fill="#111" stroke="#ddd" stroke-width="0.5"/><path d="M11.5 2.5H15.5V7" stroke="#dcdcdc" stroke-width="1" fill="none"/><path d="M12.5 0.8L10.6 2.5L12.5 4.2Z M13.8 6L15.5 8L17.2 6Z" fill="#dcdcdc"/></svg>
<div class="b" style="left:11.8px;top:409px;width:10.6px;height:10.8px;background:#fafafa;border:0.8px solid #dadada"></div>
<div class="b" style="left:5.2px;top:402.8px;width:11.6px;height:11px;background:#a0a0a0;border:0.8px solid #c0c0c0;box-shadow:0 0 0 0.8px #444"></div>
<svg style="left:8px;top:426.5px" width="11" height="8.6" viewBox="0 0 12 10"><rect x="0.6" y="0.6" width="10.8" height="8.8" fill="none" stroke="#d0d0d0" stroke-width="1"/><circle cx="6" cy="5" r="2.3" fill="none" stroke="#bdbdbd" stroke-width="0.7" stroke-dasharray="1 0.8"/></svg>
<svg style="left:8px;top:442.8px" width="11" height="8.6" viewBox="0 0 13 11"><rect x="3.6" y="0.6" width="8.6" height="6.2" fill="#535353" stroke="#d0d0d0" stroke-width="1"/><rect x="0.6" y="3.6" width="8.2" height="6.2" fill="#535353" stroke="#d0d0d0" stroke-width="1"/></svg>
<svg style="left:20px;top:450px" width="2" height="2" viewBox="0 0 3 3"><path d="M3 0V3H0Z" fill="#a0a0a0"/></svg>
<div class="b" style="left:760.5px;top:48px;width:23px;height:517px;background:#535353;"></div>
<svg style="left:774px;top:42px" width="5" height="4" viewBox="0 0 5 4"><path d="M2 0L0 2L2 4Z M4.6 0L2.6 2L4.6 4Z" fill="#c8c8c8"/></svg>
<div class="b" style="left:760.5px;top:89.5px;width:23px;height:1.5px;background:#424242;"></div>
<div class="b" style="left:760.5px;top:114px;width:23px;height:1.5px;background:#424242;"></div>
<div class="b" style="left:760.5px;top:138.5px;width:23px;height:1.5px;background:#424242;"></div>
<div class="b" style="left:760.5px;top:181.5px;width:23px;height:1.5px;background:#424242;"></div>
<div class="b" style="left:760.5px;top:224px;width:23px;height:1.5px;background:#424242;"></div>
<svg style="left:765.48px;top:55.480000000000004px" width="12.04" height="12.04" viewBox="0 0 14 14" fill="none" stroke="#dcdcdc" stroke-width="1.3"><rect x="2.2" y="2" width="3.6" height="2.6" fill="#dcdcdc" stroke="none"/><rect x="2.2" y="5.6" width="3.6" height="2.6" fill="#dcdcdc" stroke="none"/><rect x="2.2" y="9.2" width="3.6" height="3" fill="#dcdcdc" stroke="none"/><path d="M8 3H11.5V9.5" stroke-width="1.4"/><path d="M7 3L9 1.2V4.8Z" fill="#dcdcdc" stroke="none"/></svg>
<svg style="left:765.48px;top:73.48px" width="12.04" height="12.04" viewBox="0 0 14 14" fill="none" stroke="#dcdcdc" stroke-width="1.3"><path d="M2.5 1.5L12.5 7L2.5 12.5Z" fill="#dcdcdc" stroke="none"/></svg>
<svg style="left:765.48px;top:97.48px" width="12.04" height="12.04" viewBox="0 0 14 14" fill="none" stroke="#dcdcdc" stroke-width="1.3"><circle cx="7" cy="7" r="5.3" stroke-width="1.2"/><path d="M7 6.2V10" stroke-width="1.5"/><circle cx="7" cy="4.2" r="0.9" fill="#dcdcdc" stroke="none"/></svg>
<svg style="left:765.48px;top:122.48px" width="12.04" height="12.04" viewBox="0 0 14 14" fill="none" stroke="#dcdcdc" stroke-width="1.3"><path d="M1.5 6V1.5H6.5M3.5 8.5V4H8V6" stroke-width="1"/><path d="M8.2 6.5A1.3 1.3 0 0 1 10.8 6.5L10.3 9.3H12.5V11.5H6.5V9.3H8.7Z" fill="#dcdcdc" stroke="none"/><path d="M6.5 13H12.5" stroke-width="1"/></svg>
<svg style="left:765.48px;top:146.98px" width="12.04" height="12.04" viewBox="0 0 14 14" fill="none" stroke="#dcdcdc" stroke-width="1.3"><path d="M5 1.5V6M7 1V6M9 1.5V6" stroke-width="1.2"/><path d="M4 6H10V8.5L8.5 9.5V12.5H5.5V9.5L4 8.5Z" fill="#dcdcdc" stroke="none"/><path d="M11 2L13 4M11 5L13 3" stroke-width="0.8"/></svg>
<svg style="left:765.48px;top:164.98px" width="12.04" height="12.04" viewBox="0 0 14 14" fill="none" stroke="#dcdcdc" stroke-width="1.3"><path d="M1 4.5H13M1 10H13" stroke-width="1.1"/><rect x="2.5" y="2.8" width="3" height="3.4" fill="#dcdcdc" stroke="none"/><rect x="8.5" y="8.3" width="3" height="3.4" fill="#dcdcdc" stroke="none"/><path d="M12 3L13.5 4.5" stroke-width="1.5"/></svg>
<div class="b" style="left:766.5px;top:191px;font-size:10px;line-height:10px;color:#e0e0e0">A</div>
<div class="b" style="left:774.5px;top:191px;width:1px;height:10px;background:#e0e0e0;"></div>
<div class="b" style="left:768px;top:205px;font-size:10px;line-height:11px;color:#e6e6e6;font-weight:bold;-webkit-text-stroke:0.3px #e6e6e6">¶</div>
<div class="b" style="left:783.5px;top:40px;width:1px;height:528px;background:#424242;"></div>
<div class="b" style="left:957px;top:40px;width:2.5px;height:528px;background:#3e3e3e;"></div>
<svg style="left:947.5px;top:42px" width="5" height="4" viewBox="0 0 5 4"><path d="M2 0L0 2L2 4Z M4.6 0L2.6 2L4.6 4Z" fill="#c8c8c8"/></svg>
<svg style="left:988.5px;top:42px" width="5" height="4" viewBox="0 0 5 4"><path d="M0 0L2 2L0 4Z M2.6 0L4.6 2L2.6 4Z" fill="#c8c8c8"/></svg>
<div class="b" style="left:784px;top:48px;width:173px;height:16.5px;background:#424242;"></div>
<div class="b" style="left:784.5px;top:49px;width:24px;height:15.5px;background:#494949;"></div>
<div class="b" style="left:809px;top:48.5px;width:28px;height:16px;background:#535353;"></div>
<div class="t" style="left:789px;top:51.5px;color:#9a9a9a;font-size:7.4px">颜色</div>
<div class="t" style="left:815.5px;top:51.5px;color:#ececec;font-size:7.4px">色板</div>
<svg style="left:946.0px;top:54.3px" width="6" height="4.4" viewBox="0 0 7 5"><path d="M0 0.6H7M0 2.5H7M0 4.4H7" stroke="#8e8e8e" stroke-width="0.9"/></svg>
<div class="b" style="left:784px;top:64.5px;width:173px;height:183.5px;background:#4f4f4f;"></div>
<div class="b" style="left:784px;top:64.5px;width:173px;height:2.5px;background:#484848;"></div>
<div class="b" style="left:784px;top:248px;width:173px;height:13.5px;background:#565656;"></div>
<div class="b" style="left:784px;top:261.5px;width:173px;height:2px;background:#3e3e3e;"></div>
<svg style="left:0;top:0" width="1000" height="568" viewBox="0 0 1000 568"><rect x="787.60" y="71" width="8.9" height="9" fill="#000000"/><rect x="797.32" y="71" width="8.9" height="9" fill="#ebebeb"/><rect x="807.04" y="71" width="8.9" height="9" fill="#a0a0a0"/><rect x="816.76" y="71" width="8.9" height="9" fill="#e0dede"/><rect x="826.48" y="71" width="8.9" height="9" fill="#cfe8f6"/><rect x="836.20" y="71" width="8.9" height="9" fill="#fbf0f0"/><rect x="845.92" y="71" width="8.9" height="9" fill="#f9f9f4"/><rect x="855.64" y="71" width="8.9" height="9" fill="#f7f7f7"/><rect x="865.36" y="71" width="8.9" height="9" fill="#676767"/><rect x="875.08" y="71" width="8.9" height="9" fill="#626262"/><rect x="884.80" y="71" width="8.9" height="9" fill="#000000"/><rect x="894.52" y="71" width="8.9" height="9" fill="#ffffff"/><rect x="904.24" y="71" width="8.9" height="9" fill="#b58bd1"/><rect x="913.96" y="71" width="8.9" height="9" fill="#7fccd6"/><rect x="923.68" y="71" width="8.9" height="9" fill="#e9d91f"/><rect x="933.40" y="71" width="8.9" height="9" fill="#c9c94f"/><rect x="784.10" y="83.60" width="10" height="10.1" fill="#ff0000"/><rect x="795.00" y="83.60" width="10" height="10.1" fill="#ffff00"/><rect x="805.90" y="83.60" width="10" height="10.1" fill="#00ff00"/><rect x="816.80" y="83.60" width="10" height="10.1" fill="#00ffff"/><rect x="827.70" y="83.60" width="10" height="10.1" fill="#0000ff"/><rect x="838.60" y="83.60" width="10" height="10.1" fill="#ff00ff"/><rect x="849.50" y="83.60" width="10" height="10.1" fill="#ffffff"/><rect x="860.40" y="83.60" width="10" height="10.1" fill="#f4eaec"/><rect x="871.30" y="83.60" width="10" height="10.1" fill="#e8e8e8"/><rect x="882.20" y="83.60" width="10" height="10.1" fill="#e1e1e1"/><rect x="893.10" y="83.60" width="10" height="10.1" fill="#dbdbdb"/><rect x="904.00" y="83.60" width="10" height="10.1" fill="#d5d5d5"/><rect x="914.90" y="83.60" width="10" height="10.1" fill="#cfcfcf"/><rect x="925.80" y="83.60" width="10" height="10.1" fill="#c8c8c8"/><rect x="784.10" y="94.60" width="10" height="10.1" fill="#b2b2b2"/><rect x="795.00" y="94.60" width="10" height="10.1" fill="#aaaaaa"/><rect x="805.90" y="94.60" width="10" height="10.1" fill="#ee0a1a"/><rect x="816.80" y="94.60" width="10" height="10.1" fill="#ffe800"/><rect x="827.70" y="94.60" width="10" height="10.1" fill="#009c48"/><rect x="838.60" y="94.60" width="10" height="10.1" fill="#14a2ea"/><rect x="849.50" y="94.60" width="10" height="10.1" fill="#221c8c"/><rect x="860.40" y="94.60" width="10" height="10.1" fill="#e8007c"/><rect x="871.30" y="94.60" width="10" height="10.1" fill="#8e9494"/><rect x="882.20" y="94.60" width="10" height="10.1" fill="#868686"/><rect x="893.10" y="94.60" width="10" height="10.1" fill="#7c7c7c"/><rect x="904.00" y="94.60" width="10" height="10.1" fill="#727272"/><rect x="914.90" y="94.60" width="10" height="10.1" fill="#686868"/><rect x="925.80" y="94.60" width="10" height="10.1" fill="#5c5c5c"/><rect x="784.10" y="105.60" width="10" height="10.1" fill="#444444"/><rect x="795.00" y="105.60" width="10" height="10.1" fill="#383838"/><rect x="805.90" y="105.60" width="10" height="10.1" fill="#282a2a"/><rect x="816.80" y="105.60" width="10" height="10.1" fill="#000000"/><rect x="827.70" y="105.60" width="10" height="10.1" fill="#f7977a"/><rect x="838.60" y="105.60" width="10" height="10.1" fill="#f9ad81"/><rect x="849.50" y="105.60" width="10" height="10.1" fill="#fdc68a"/><rect x="860.40" y="105.60" width="10" height="10.1" fill="#fff79a"/><rect x="871.30" y="105.60" width="10" height="10.1" fill="#c4df9b"/><rect x="882.20" y="105.60" width="10" height="10.1" fill="#a2d39c"/><rect x="893.10" y="105.60" width="10" height="10.1" fill="#82ca9d"/><rect x="904.00" y="105.60" width="10" height="10.1" fill="#7bcdc8"/><rect x="914.90" y="105.60" width="10" height="10.1" fill="#6ecff6"/><rect x="925.80" y="105.60" width="10" height="10.1" fill="#7ea7d8"/><rect x="784.10" y="116.60" width="10" height="10.1" fill="#8493ca"/><rect x="795.00" y="116.60" width="10" height="10.1" fill="#8882be"/><rect x="805.90" y="116.60" width="10" height="10.1" fill="#a187be"/><rect x="816.80" y="116.60" width="10" height="10.1" fill="#bc8dbf"/><rect x="827.70" y="116.60" width="10" height="10.1" fill="#f49ac2"/><rect x="838.60" y="116.60" width="10" height="10.1" fill="#f6989d"/><rect x="849.50" y="116.60" width="10" height="10.1" fill="#f26c4f"/><rect x="860.40" y="116.60" width="10" height="10.1" fill="#f68e55"/><rect x="871.30" y="116.60" width="10" height="10.1" fill="#fbaf5c"/><rect x="882.20" y="116.60" width="10" height="10.1" fill="#fff467"/><rect x="893.10" y="116.60" width="10" height="10.1" fill="#acd372"/><rect x="904.00" y="116.60" width="10" height="10.1" fill="#7cc576"/><rect x="914.90" y="116.60" width="10" height="10.1" fill="#3bb878"/><rect x="925.80" y="116.60" width="10" height="10.1" fill="#1abbb4"/><rect x="784.10" y="127.60" width="10" height="10.1" fill="#00bff3"/><rect x="795.00" y="127.60" width="10" height="10.1" fill="#438cca"/><rect x="805.90" y="127.60" width="10" height="10.1" fill="#5574b9"/><rect x="816.80" y="127.60" width="10" height="10.1" fill="#605ca8"/><rect x="827.70" y="127.60" width="10" height="10.1" fill="#855fa8"/><rect x="838.60" y="127.60" width="10" height="10.1" fill="#a763a8"/><rect x="849.50" y="127.60" width="10" height="10.1" fill="#f06ea9"/><rect x="860.40" y="127.60" width="10" height="10.1" fill="#f26d7d"/><rect x="871.30" y="127.60" width="10" height="10.1" fill="#ed1c24"/><rect x="882.20" y="127.60" width="10" height="10.1" fill="#f26522"/><rect x="893.10" y="127.60" width="10" height="10.1" fill="#f7941d"/><rect x="904.00" y="127.60" width="10" height="10.1" fill="#fff200"/><rect x="914.90" y="127.60" width="10" height="10.1" fill="#8dc73f"/><rect x="925.80" y="127.60" width="10" height="10.1" fill="#39b54a"/><rect x="784.10" y="138.60" width="10" height="10.1" fill="#00a651"/><rect x="795.00" y="138.60" width="10" height="10.1" fill="#00a99d"/><rect x="805.90" y="138.60" width="10" height="10.1" fill="#00aeef"/><rect x="816.80" y="138.60" width="10" height="10.1" fill="#0072bc"/><rect x="827.70" y="138.60" width="10" height="10.1" fill="#0054a6"/><rect x="838.60" y="138.60" width="10" height="10.1" fill="#2e3192"/><rect x="849.50" y="138.60" width="10" height="10.1" fill="#662d91"/><rect x="860.40" y="138.60" width="10" height="10.1" fill="#92278f"/><rect x="871.30" y="138.60" width="10" height="10.1" fill="#ec008c"/><rect x="882.20" y="138.60" width="10" height="10.1" fill="#ed145b"/><rect x="893.10" y="138.60" width="10" height="10.1" fill="#cd0e14"/><rect x="904.00" y="138.60" width="10" height="10.1" fill="#d05411"/><rect x="914.90" y="138.60" width="10" height="10.1" fill="#d47f0c"/><rect x="925.80" y="138.60" width="10" height="10.1" fill="#ded000"/><rect x="784.10" y="149.60" width="10" height="10.1" fill="#75b033"/><rect x="795.00" y="149.60" width="10" height="10.1" fill="#22a23f"/><rect x="805.90" y="149.60" width="10" height="10.1" fill="#009647"/><rect x="816.80" y="149.60" width="10" height="10.1" fill="#00998d"/><rect x="827.70" y="149.60" width="10" height="10.1" fill="#009cd7"/><rect x="838.60" y="149.60" width="10" height="10.1" fill="#0063a9"/><rect x="849.50" y="149.60" width="10" height="10.1" fill="#004595"/><rect x="860.40" y="149.60" width="10" height="10.1" fill="#241a84"/><rect x="871.30" y="149.60" width="10" height="10.1" fill="#5a1281"/><rect x="882.20" y="149.60" width="10" height="10.1" fill="#83057f"/><rect x="893.10" y="149.60" width="10" height="10.1" fill="#d1007b"/><rect x="904.00" y="149.60" width="10" height="10.1" fill="#d1004b"/><rect x="914.90" y="149.60" width="10" height="10.1" fill="#a00000"/><rect x="925.80" y="149.60" width="10" height="10.1" fill="#a23d00"/><rect x="784.10" y="160.60" width="10" height="10.1" fill="#a56000"/><rect x="795.00" y="160.60" width="10" height="10.1" fill="#aca200"/><rect x="805.90" y="160.60" width="10" height="10.1" fill="#548720"/><rect x="816.80" y="160.60" width="10" height="10.1" fill="#007c2a"/><rect x="827.70" y="160.60" width="10" height="10.1" fill="#007432"/><rect x="838.60" y="160.60" width="10" height="10.1" fill="#00756c"/><rect x="849.50" y="160.60" width="10" height="10.1" fill="#0078a8"/><rect x="860.40" y="160.60" width="10" height="10.1" fill="#004783"/><rect x="871.30" y="160.60" width="10" height="10.1" fill="#002c73"/><rect x="882.20" y="160.60" width="10" height="10.1" fill="#110064"/><rect x="893.10" y="160.60" width="10" height="10.1" fill="#420063"/><rect x="904.00" y="160.60" width="10" height="10.1" fill="#630060"/><rect x="914.90" y="160.60" width="10" height="10.1" fill="#a2005c"/><rect x="925.80" y="160.60" width="10" height="10.1" fill="#a10032"/><rect x="784.10" y="171.60" width="10" height="10.1" fill="#e6cfb2"/><rect x="795.00" y="171.60" width="10" height="10.1" fill="#b9a18c"/><rect x="805.90" y="171.60" width="10" height="10.1" fill="#96786a"/><rect x="816.80" y="171.60" width="10" height="10.1" fill="#5c504c"/><rect x="827.70" y="171.60" width="10" height="10.1" fill="#48343a"/><rect x="838.60" y="171.60" width="10" height="10.1" fill="#f0ba78"/><rect x="849.50" y="171.60" width="10" height="10.1" fill="#d8a05a"/><rect x="860.40" y="171.60" width="10" height="10.1" fill="#c88232"/><rect x="871.30" y="171.60" width="10" height="10.1" fill="#b9691a"/><rect x="882.20" y="171.60" width="10" height="10.1" fill="#964b06"/></svg>
<svg style="left:914px;top:250px" width="8" height="8" viewBox="0 0 8 8"><path d="M0.6 0.6H7.4V5L5 7.4H0.6Z" fill="none" stroke="#d0d0d0" stroke-width="1"/><path d="M7.4 5H5V7.4" fill="none" stroke="#d0d0d0" stroke-width="0.8"/></svg>
<svg style="left:931px;top:249.5px" width="8" height="9" viewBox="0 0 8 9"><path d="M0.3 1.8H7.7M3 0.6H5" stroke="#8a8a8a" stroke-width="1"/><path d="M1.2 2.6H6.8V8.6H1.2Z" fill="#8a8a8a"/></svg>
<div class="b" style="left:784px;top:263.5px;width:173px;height:17px;background:#424242;"></div>
<div class="b" style="left:784.5px;top:264.5px;width:25.5px;height:16px;background:#494949;"></div>
<div class="b" style="left:810.5px;top:264px;width:26.5px;height:16.5px;background:#535353;"></div>
<div class="t" style="left:790px;top:267px;color:#9a9a9a;font-size:7.4px">调整</div>
<div class="t" style="left:816px;top:267px;color:#ececec;font-size:7.4px">属性</div>
<svg style="left:946.0px;top:269.3px" width="6" height="4.4" viewBox="0 0 7 5"><path d="M0 0.6H7M0 2.5H7M0 4.4H7" stroke="#8e8e8e" stroke-width="0.9"/></svg>
<div class="b" style="left:784px;top:280.5px;width:173px;height:132px;background:#535353;"></div>
<div class="b" style="left:784px;top:283px;width:173px;height:16.5px;background:#595959;"></div>
<div class="b" style="left:784px;top:299.5px;width:173px;height:1px;background:#444;"></div>
<div class="b" style="left:946.5px;top:300.5px;width:9.5px;height:95px;background:#5b5b5b;"></div>
<svg style="left:792px;top:286px" width="10" height="10" viewBox="0 0 10 10"><rect x="0.6" y="0.6" width="8.8" height="8.8" fill="#3a3a3a" stroke="#e0e0e0" stroke-width="1"/><path d="M1.5 8L4 4.8L5.8 6.8L7 5.6L8.6 8Z" fill="#e0e0e0"/><circle cx="6.8" cy="3.2" r="0.9" fill="#e0e0e0"/></svg>
<div class="t" style="left:808.5px;top:286px;font-size:7.2px">像素图层属性</div>
<div class="t" style="left:790.5px;top:309px;color:#c4c4c4;font-size:7.5px"><span style="font-size:0.88em">W:</span></div>
<div class="f" style="left:802px;top:309.5px;width:38px;height:9.5px"></div>
<div class="t" style="left:804px;top:309.3px;font-size:7px"><span style="font-size:0.94em">28.22</span> 厘米</div>
<div class="b" style="left:845.5px;top:305.5px;width:13.5px;height:14.5px;background:#3a3a3a;border-radius:1px"></div>
<svg style="left:847.5px;top:310.5px" width="10" height="5" viewBox="0 0 10 5"><rect x="0.5" y="0.7" width="4.2" height="3.6" rx="1.8" fill="none" stroke="#c8c8c8" stroke-width="1"/><rect x="5.3" y="0.7" width="4.2" height="3.6" rx="1.8" fill="none" stroke="#c8c8c8" stroke-width="1"/><path d="M3.4 2.5H6.6" stroke="#c8c8c8" stroke-width="1"/></svg>
<div class="t" style="left:867px;top:309px;color:#c4c4c4;font-size:7.5px"><span style="font-size:0.88em">H:</span></div>
<div class="f" style="left:876.5px;top:309.5px;width:37px;height:9.5px"></div>
<div class="t" style="left:878px;top:309.3px;font-size:7px"><span style="font-size:0.94em">28.22</span> 厘米</div>
<div class="t" style="left:793px;top:325px;color:#c4c4c4;font-size:7px"><span style="font-size:0.88em">X:</span></div>
<div class="f" style="left:802px;top:325px;width:38px;height:10px"></div>
<div class="t" style="left:804px;top:325px;font-size:7.2px"><span style="font-size:0.88em">0</span> 厘米</div>
<div class="t" style="left:869px;top:325px;color:#c4c4c4;font-size:7px"><span style="font-size:0.88em">Y:</span></div>
<div class="f" style="left:876.5px;top:325px;width:37px;height:10px"></div>
<div class="t" style="left:878px;top:325px;font-size:7.2px"><span style="font-size:0.88em">0</span> 厘米</div>
<div class="b" style="left:784px;top:412.5px;width:173px;height:1.5px;background:#3e3e3e;"></div>
<div class="b" style="left:959.5px;top:48px;width:37.5px;height:517px;background:#535353;"></div>
<div class="b" style="left:995px;top:0px;width:5px;height:568px;background:#505050;"></div>
<div class="b" style="left:994.5px;top:40px;width:0.8px;height:528px;background:#464646;"></div>
<div class="b" style="left:959.5px;top:72px;width:37.5px;height:1px;background:#424242;"></div>
<svg style="left:963px;top:56.5px" width="14" height="11" viewBox="0 0 14 11"><path d="M3.5 10.2A3.2 3.2 0 0 1 3.2 4A4.2 4.2 0 0 1 11.2 3.6A3.4 3.4 0 0 1 10.6 10.2Z" fill="#dedede"/><path d="M4.2 3.8C6 3.3 7.5 4.5 8.2 6C8.8 7.3 10 7.8 11 7.3" stroke="#535353" stroke-width="1" fill="none"/><path d="M4 6.5C5.5 6.3 6.3 7.5 7.5 8.2" stroke="#535353" stroke-width="0.9" fill="none"/></svg>
<div class="t" style="left:980.8px;top:57px;color:#e8e8e8;font-size:7.4px">库</div>
<div class="b" style="left:784px;top:414px;width:173px;height:16.5px;background:#424242;"></div>
<div class="b" style="left:784px;top:414.5px;width:25.5px;height:16px;background:#535353;"></div>
<div class="b" style="left:810px;top:415px;width:28px;height:15.5px;background:#494949;"></div>
<div class="b" style="left:838.5px;top:415px;width:25px;height:15.5px;background:#494949;"></div>
<div class="t" style="left:789.5px;top:417.5px;color:#ececec;font-size:7.4px">图层</div>
<div class="t" style="left:816.5px;top:417.5px;color:#9a9a9a;font-size:7.4px">路径</div>
<div class="t" style="left:843px;top:417.5px;color:#9a9a9a;font-size:7.4px">通道</div>
<svg style="left:946.0px;top:420.3px" width="6" height="4.4" viewBox="0 0 7 5"><path d="M0 0.6H7M0 2.5H7M0 4.4H7" stroke="#8e8e8e" stroke-width="0.9"/></svg>
<div class="b" style="left:784px;top:430.5px;width:173px;height:134.5px;background:#535353;"></div>
<div class="f" style="left:787px;top:437px;width:51.5px;height:10.5px"></div>
<svg style="left:790px;top:439px" width="7" height="7" viewBox="0 0 7 7"><circle cx="4.2" cy="2.8" r="2" fill="none" stroke="#d8d8d8" stroke-width="1"/><path d="M2.8 4.2L0.6 6.4" stroke="#d8d8d8" stroke-width="1.1"/></svg>
<div class="t" style="left:799px;top:437.3px;">类型</div>
<svg style="left:831.4px;top:441.3px" width="4.2" height="2.5" viewBox="0 0 5 3"><path d="M0.3 0.3L2.5 2.5L4.7 0.3" stroke="#a4a4a4" stroke-width="1.0" fill="none"/></svg>
<svg style="left:848px;top:438px" width="9" height="8" viewBox="0 0 9 8"><rect x="0.6" y="0.6" width="7.8" height="6.8" fill="none" stroke="#dcdcdc" stroke-width="1"/><path d="M1.5 6.5L3.5 3.8L5 5.4L6 4.6L7.5 6.5Z" fill="#dcdcdc"/></svg>
<svg style="left:862px;top:438px" width="8" height="8" viewBox="0 0 8 8"><circle cx="4" cy="4" r="3.3" fill="none" stroke="#dcdcdc" stroke-width="1"/><path d="M4 0.7A3.3 3.3 0 0 1 4 7.3Z" fill="#dcdcdc" transform="rotate(45 4 4)"/></svg>
<div class="b" style="left:877.5px;top:436.5px;font-family:'Liberation Serif',serif;font-weight:bold;font-size:10px;line-height:11px;color:#dcdcdc">T</div>
<svg style="left:891.5px;top:438px" width="9" height="8" viewBox="0 0 9 8"><rect x="1.5" y="1.5" width="6" height="5" fill="none" stroke="#dcdcdc" stroke-width="1"/><rect x="0" y="0" width="2.4" height="2.4" fill="#dcdcdc"/><rect x="6.6" y="0" width="2.4" height="2.4" fill="#dcdcdc"/><rect x="0" y="5.6" width="2.4" height="2.4" fill="#dcdcdc"/><rect x="6.6" y="5.6" width="2.4" height="2.4" fill="#dcdcdc"/></svg>
<svg style="left:907px;top:437.5px" width="8" height="9" viewBox="0 0 8 9"><path d="M2 4V2.6A2 2 0 0 1 6 2.6V4" fill="none" stroke="#dcdcdc" stroke-width="1"/><rect x="0.8" y="3.8" width="6.4" height="4.8" fill="#dcdcdc"/></svg>
<div class="b" style="left:924.5px;top:437px;width:5px;height:5px;border-radius:50%;background:#e8e8e8"></div>
<div class="f" style="left:787px;top:454px;width:69.5px;height:10px"></div>
<div class="t" style="left:791px;top:454px;">正常</div>
<svg style="left:849.4px;top:457.8px" width="4.2" height="2.5" viewBox="0 0 5 3"><path d="M0.3 0.3L2.5 2.5L4.7 0.3" stroke="#a4a4a4" stroke-width="1.0" fill="none"/></svg>
<div class="t" style="left:862.5px;top:454px;font-size:7.6px">不透明度<span style="font-size:0.88em">:</span></div>
<div class="f" style="left:896.5px;top:454px;width:23px;height:10px"></div>
<div class="t" style="left:898.5px;top:454px;font-size:7.5px"><span style="font-size:0.88em">100%</span></div>
<div class="f" style="left:921px;top:454px;width:8.5px;height:10px"></div>
<svg style="left:923.1px;top:457.8px" width="4.2" height="2.5" viewBox="0 0 5 3"><path d="M0.3 0.3L2.5 2.5L4.7 0.3" stroke="#999" stroke-width="1.0" fill="none"/></svg>
<div class="t" style="left:787px;top:470px;">锁定<span style="font-size:0.88em">:</span></div>
<svg style="left:810px;top:471px" width="8" height="8" viewBox="0 0 8 8"><rect x="0" y="0" width="8" height="8" fill="#e0e0e0"/><path d="M0 0H2V2H0ZM4 0H6V2H4ZM2 2H4V4H2ZM6 2H8V4H6ZM0 4H2V6H0ZM4 4H6V6H4ZM2 6H4V8H2ZM6 6H8V8H6Z" fill="#555"/></svg>
<svg style="left:824px;top:470.5px" width="9" height="9" viewBox="0 0 9 9"><path d="M8 1L4 5" stroke="#dcdcdc" stroke-width="1.4" stroke-linecap="round"/><path d="M3.5 5.5C2 5.5 2 7 1 8C2.5 8.5 4.5 8 4.3 6.3Z" fill="#dcdcdc"/></svg>
<div class="t" style="left:877.5px;top:470px;">填充<span style="font-size:0.88em">:</span></div>
<div class="f" style="left:896.5px;top:470px;width:23px;height:10px"></div>
<div class="t" style="left:898.5px;top:470px;font-size:7.5px"><span style="font-size:0.88em">100%</span></div>
<div class="f" style="left:921px;top:470px;width:8.5px;height:10px"></div>
<svg style="left:923.1px;top:473.8px" width="4.2" height="2.5" viewBox="0 0 5 3"><path d="M0.3 0.3L2.5 2.5L4.7 0.3" stroke="#999" stroke-width="1.0" fill="none"/></svg>
<div class="b" style="left:784px;top:484px;width:165px;height:66px;background:#4a4a4a;"></div>
<div class="b" style="left:949px;top:484px;width:8px;height:66px;background:#505050;"></div>
<div class="b" style="left:805px;top:485px;width:10px;height:3px;background:#e8e8e8;"></div>
<div class="b" style="left:819px;top:486px;width:1px;height:4px;background:#c8c8c8;"></div>
<div class="b" style="left:819px;top:489px;width:5px;height:1px;background:#c8c8c8;"></div>
<div class="b" style="left:928.5px;top:489.5px;width:14px;height:3px;background:#cfcfcf;transform:rotate(20deg);border-radius:1.5px"></div>
<div class="b" style="left:784px;top:526px;width:165px;height:23px;background:#6c6c6c;"></div>
<div class="t" style="left:829px;top:497.5px;color:#bdbdbd;font-size:7px">效果</div>
<div class="t" style="left:841px;top:511px;color:#bdbdbd;font-size:7px">斜面和浮雕</div>
<div class="t" style="left:836px;top:521px;color:#bdbdbd;font-size:7px">投影</div>
<svg style="left:826px;top:523.5px" width="7" height="5" viewBox="0 0 7 5"><path d="M0.3 2.5C2 0 5 0 6.7 2.5C5 5 2 5 0.3 2.5Z" fill="none" stroke="#bdbdbd" stroke-width="0.8"/><circle cx="3.5" cy="2.5" r="1" fill="#bdbdbd"/></svg>
<div class="b" style="left:803px;top:527.5px;width:22px;height:21px;background:#f4f4f4;border:1px solid #ffffff;box-shadow:0 0 0 0.8px #555"></div>
<div class="t" style="left:829px;top:535px;color:#e4e4e4;font-size:7.5px">图层 <span style="font-size:0.88em">2</span></div>
<div class="b" style="left:784px;top:549.5px;width:173px;height:15.5px;background:#4a4a4a;"></div>
<svg style="left:832.5px;top:554.5px" width="10" height="5" viewBox="0 0 10 5"><rect x="0.5" y="0.7" width="4.2" height="3.6" rx="1.8" fill="none" stroke="#777" stroke-width="1"/><rect x="5.3" y="0.7" width="4.2" height="3.6" rx="1.8" fill="none" stroke="#777" stroke-width="1"/><path d="M3.4 2.5H6.6" stroke="#777" stroke-width="1"/></svg>
<div class="b" style="left:849.5px;top:551px;font-family:'Liberation Serif',serif;font-style:italic;font-size:10px;line-height:11px;color:#e0e0e0">fx</div>
<svg style="left:865px;top:553px" width="10" height="8" viewBox="0 0 10 8"><rect x="0" y="0" width="10" height="8" rx="0.8" fill="#e0e0e0"/><circle cx="5" cy="4" r="2.2" fill="#535353"/></svg>
<svg style="left:883px;top:552.5px" width="9" height="9" viewBox="0 0 9 9"><circle cx="4.5" cy="4.5" r="3.8" fill="none" stroke="#e0e0e0" stroke-width="1"/><path d="M4.5 0.7A3.8 3.8 0 0 1 4.5 8.3Z" fill="#e0e0e0" transform="rotate(45 4.5 4.5)"/></svg>
<svg style="left:898.5px;top:553px" width="10" height="8" viewBox="0 0 10 8"><path d="M0 0.5H3.8L4.8 1.8H10V8H0Z" fill="#e0e0e0"/></svg>
<svg style="left:915px;top:553px" width="8" height="8" viewBox="0 0 8 8"><path d="M0.6 0.6H7.4V5L5 7.4H0.6Z" fill="none" stroke="#e0e0e0" stroke-width="1"/><path d="M7.4 5H5V7.4" fill="none" stroke="#e0e0e0" stroke-width="0.8"/></svg>
<svg style="left:931px;top:552.5px" width="8" height="9" viewBox="0 0 8 9"><path d="M0.3 1.8H7.7M3 0.6H5" stroke="#bdbdbd" stroke-width="1"/><path d="M1.2 2.6H6.8V8.6H1.2Z" fill="#bdbdbd"/></svg>
<div class="b" style="left:752.5px;top:545px;width:32px;height:20px;background:#4c4c4c;"></div>
<div class="b" style="left:752.5px;top:486px;width:32px;height:59px;background:#4e4e4e;"></div>
<div class="b" style="left:752.5px;top:544.5px;width:32px;height:1px;background:#404040;"></div>
<div class="t" style="left:758.5px;top:549px;color:#e0e0e0;font-size:7.5px">图层</div>
<div class="b" style="left:786.5px;top:552px;width:1px;height:8px;background:#3a3a3a;"></div>
<svg style="left:0;top:0" width="1000" height="568" viewBox="0 0 1000 568"><defs><clipPath id="cb"><rect x="792.5" y="480" width="60" height="45"/></clipPath><clipPath id="cj"><rect x="793" y="518" width="160" height="32"/></clipPath></defs><g clip-path="url(#cb)"><text transform="translate(770.6,516.2) scale(1,1.13)" font-family="Liberation Sans, sans-serif" font-weight="bold" font-size="33" fill="#d4d4d4" stroke="#d4d4d4" stroke-width="2" stroke-linejoin="round" letter-spacing="0.5">Bai</text></g><g fill="#d4d4d4"><ellipse cx="836" cy="482.7" rx="6.4" ry="8.6" transform="rotate(-12 836 482.7)"/><ellipse cx="848" cy="470.3" rx="6.4" ry="8.8" transform="rotate(-4 848 470.3)"/><ellipse cx="864.5" cy="471.5" rx="6.4" ry="8.4" transform="rotate(10 864.5 471.5)"/><ellipse cx="874.4" cy="486" rx="6.2" ry="8.2" transform="rotate(28 874.4 486)"/><path d="M854 484.5C860 484.5 863 491 867.5 496C873 502 875.5 510 871 515C867 519 861 517.5 854 516.5C847 517.5 841 519.5 837 515.5C832.5 510.5 835 502 840.5 496C845 491 848 484.5 854 484.5Z"/></g><text x="839.5" y="513" font-family="Liberation Sans, sans-serif" font-weight="bold" font-size="25" fill="#4a4a4a" textLength="28.5" lengthAdjust="spacingAndGlyphs">du</text><g clip-path="url(#cj)"><text x="777" y="539.3" font-family="Liberation Sans, sans-serif" font-size="19" letter-spacing="0.85" fill="#efefef" stroke="#efefef" stroke-width="0.5">jingyan.baidu.com</text></g></svg>
<div class="b" style="left:803.5px;top:527.5px;width:20.5px;height:21px;background:#f6f6f6;border:1px solid #ffffff"></div>
</div></body></html>
